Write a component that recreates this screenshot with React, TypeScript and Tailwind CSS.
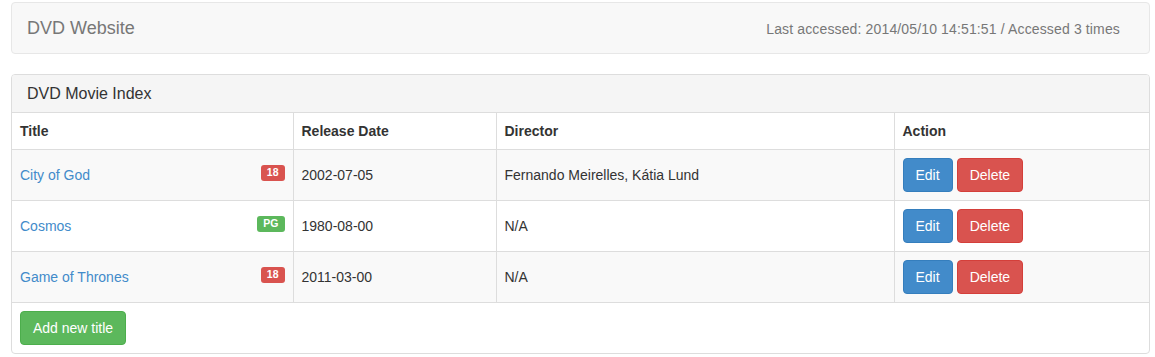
import React from 'react';

type Movie = {
  title: string;
  rating: '18' | 'PG';
  released: string;
  director: string;
};

const movies: Movie[] = [
  { title: 'City of God', rating: '18', released: '2002-07-05', director: 'Fernando Meirelles, Kátia Lund' },
  { title: 'Cosmos', rating: 'PG', released: '1980-08-00', director: 'N/A' },
  { title: 'Game of Thrones', rating: '18', released: '2011-03-00', director: 'N/A' },
];

const RatingLabel = ({ rating }: { rating: Movie['rating'] }) => (
  <span
    className={`float-right inline-block rounded-[3px] px-[6px] pt-[2px] pb-[3px] text-[10.5px] font-bold leading-none text-white ${
      rating === 'PG' ? 'bg-[#5cb85c]' : 'bg-[#d9534f]'
    }`}
  >
    {rating}
  </span>
);

export default function App() {
  return (
    <div className="pt-[2px] pl-[11px] pr-[5px] font-['Liberation_Sans',Arial,sans-serif] text-[14px] leading-[20px] text-[#333]">
      {/* navbar */}
      <div className="flex min-h-[52px] items-start justify-between rounded-[4px] border border-[#e7e7e7] bg-[#f8f8f8]">
        <span className="px-[15px] py-[15px] text-[18px] leading-[20px] text-[#777]">DVD Website</span>
        <span className="mt-[16px] mr-[29px] tracking-[0.14px] text-[#777]">Last accessed: 2014/05/10 14:51:51 / Accessed 3 times</span>
      </div>

      {/* panel */}
      <div className="mt-[20px] overflow-hidden rounded-[4px] border border-[#ddd] bg-white">
        <div className="border-b border-[#ddd] bg-[#f5f5f5] px-[15px] py-[10px] text-[16px] leading-[17px] text-[#333]">
          DVD Movie Index
        </div>

        <table className="w-full border-collapse">
          <thead>
            <tr className="border-b border-[#ddd] text-left">
              <th className="w-[281px] p-[8px] font-bold">Title</th>
              <th className="w-[203px] border-l border-[#ddd] p-[8px] font-bold">Release Date</th>
              <th className="w-[398px] border-l border-[#ddd] p-[8px] font-bold">Director</th>
              <th className="border-l border-[#ddd] p-[8px] font-bold">Action</th>
            </tr>
          </thead>
          <tbody>
            {movies.map((m, i) => (
              <tr key={m.title} className={`border-b border-[#ddd] ${i % 2 === 0 ? 'bg-[#f9f9f9]' : 'bg-white'}`}>
                <td className="p-[8px] align-middle">
                  <a href="#" className="text-[#428bca]">{m.title}</a>
                  <RatingLabel rating={m.rating} />
                </td>
                <td className="border-l border-[#ddd] p-[8px] align-middle">{m.released}</td>
                <td className="border-l border-[#ddd] p-[8px] align-middle">{m.director}</td>
                <td className="border-l border-[#ddd] p-[8px] align-middle">
                  <div className="flex gap-[4px]">
                    <button className="rounded-[4px] border border-[#357ebd] bg-[#428bca] px-[12px] py-[6px] text-white">Edit</button>
                    <button className="rounded-[4px] border border-[#d43f3a] bg-[#d9534f] px-[12px] py-[6px] text-white">Delete</button>
                  </div>
                </td>
              </tr>
            ))}
          </tbody>
        </table>

        <div className="p-[8px]">
          <button className="rounded-[4px] border border-[#4cae4c] bg-[#5cb85c] px-[12px] py-[6px] text-white">Add new title</button>
        </div>
      </div>
    </div>
  );
}
